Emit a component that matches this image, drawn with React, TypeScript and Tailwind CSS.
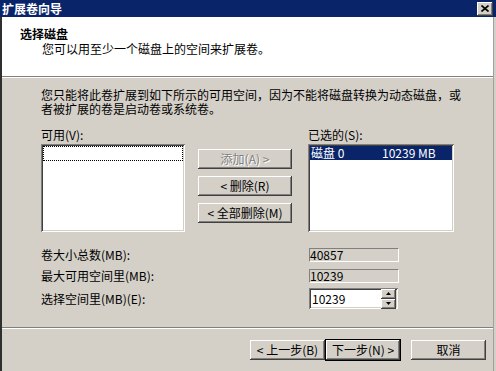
import React from 'react';

const raised =
  'shadow-[inset_-1px_-1px_#404040,inset_1px_1px_#ffffff,inset_-2px_-2px_#808080,inset_2px_2px_#d4d0c8]';
const sunken =
  'shadow-[inset_1px_1px_#808080,inset_-1px_-1px_#ffffff,inset_2px_2px_#404040,inset_-2px_-2px_#d4d0c8]';

const Btn: React.FC<{ children: React.ReactNode; disabled?: boolean; def?: boolean; w?: string }> = ({
  children,
  disabled,
  def,
  w = 'w-[94px]',
}) => (
  <div
    className={`${w} h-[20px] flex items-center justify-center bg-[#d4d0c8] ${def ? 'outline outline-1 outline-black' : ''} ${raised} ${
      disabled ? 'text-[#808080] [text-shadow:1px_1px_0_#ffffff]' : 'text-black'
    }`}
  >
    {children}
  </div>
);

const SpinArrow: React.FC<{ up?: boolean }> = ({ up }) => (
  <div className={`w-[15px] h-[10px] bg-[#d4d0c8] flex items-center justify-center ${raised}`}>
    <svg width="5" height="3" viewBox="0 0 5 3">
      <path d={up ? 'M2.5 0 L5 3 L0 3 Z' : 'M0 0 L5 0 L2.5 3 Z'} fill="#000" />
    </svg>
  </div>
);

export default function App() {
  return (
    <div className="w-[496px] h-[371px] overflow-hidden bg-[#d4d0c8] flex flex-col font-['Noto_Sans_CJK_SC',sans-serif] text-[12px] text-black">
      {/* Title bar */}
      <div className="h-[17px] bg-[#0a246a] flex items-center justify-between pl-[2px] pr-[3px]">
        <span className="text-white font-bold leading-[14px]">扩展卷向导</span>
        <div className={`w-[16px] h-[14px] bg-[#d4d0c8] flex items-center justify-center ${raised}`}>
          <svg width="8" height="7" viewBox="0 0 8 7">
            <path d="M0.5 0.5 L7.5 6.5 M7.5 0.5 L0.5 6.5" stroke="#000" strokeWidth="1.6" />
          </svg>
        </div>
      </div>

      <div className="flex-1 flex">
        <div className="w-[2px] bg-[#2f2f2f]" />

        <div className="flex-1 flex flex-col">
          {/* Header */}
          <div className="h-[59px] bg-white pl-[18px] pt-[10px]">
            <div className="font-bold leading-[14px]">选择磁盘</div>
            <div className="pl-[22px] mt-[1px] leading-[14px]">您可以用至少一个磁盘上的空间来扩展卷。</div>
          </div>
          <div className="h-[2px] border-t border-[#808080] border-b border-b-white" />

          {/* Body */}
          <div className="pl-[39px] pt-[10px] leading-[14px]">
            <div>您只能将此卷扩展到如下所示的可用空间，因为不能将磁盘转换为动态磁盘，或</div>
            <div>者被扩展的卷是启动卷或系统卷。</div>
          </div>

          <div className="flex pl-[39px] mt-[12px]">
            <div className="w-[144px] flex flex-col">
              <div className="leading-[13px]">可用(V):</div>
              <div className={`mt-[3px] h-[88px] bg-white p-[2px] ${sunken}`}>
                <div className="h-[15px] border border-dotted border-black" />
              </div>
            </div>

            <div className="ml-[13px] pt-[21px] flex flex-col gap-[7px]">
              <Btn disabled>添加(A) &gt;</Btn>
              <Btn>&lt; 删除(R)</Btn>
              <Btn>&lt; 全部删除(M)</Btn>
            </div>

            <div className="ml-[16px] w-[146px] flex flex-col">
              <div className="leading-[13px]">已选的(S):</div>
              <div className={`mt-[3px] h-[88px] bg-white p-[2px] ${sunken}`}>
                <div className="h-[14px] bg-[#0a246a] text-white flex items-center leading-[14px]">
                  <span className="w-[72px] pl-[1px]">磁盘 0</span>
                  <span>10239 MB</span>
                </div>
              </div>
            </div>
          </div>

          {/* Size fields */}
          <div className="pl-[39px] mt-[16px] flex flex-col">
            <div className="flex items-center h-[14px]">
              <span className="w-[268px]">卷大小总数(MB):</span>
              <div className="w-[90px] h-[14px] border border-[#808080] border-r-white border-b-white flex items-center leading-[12px]">
                40857
              </div>
            </div>
            <div className="flex items-center h-[14px] mt-[7px]">
              <span className="w-[268px]">最大可用空间里(MB):</span>
              <div className="w-[90px] h-[14px] border border-[#808080] border-r-white border-b-white flex items-center leading-[12px]">
                10239
              </div>
            </div>
            <div className="flex items-center h-[21px] mt-[5px]">
              <span className="w-[268px]">选择空间里(MB)(E):</span>
              <div className={`w-[89px] h-[21px] bg-white flex items-center pl-[3px] pr-[2px] ${sunken}`}>
                <span className="flex-1">10239</span>
                <div className="flex flex-col">
                  <SpinArrow up />
                  <SpinArrow />
                </div>
              </div>
            </div>
          </div>

          <div className="mt-[18px] h-[2px] border-t border-[#808080] border-b border-b-white" />

          {/* Wizard buttons */}
          <div className="mt-[11px] flex pl-[248px]">
            <Btn w="w-[75px]">&lt; 上一步(B)</Btn>
            <div className="ml-[1px]">
              <Btn def w="w-[74px]">下一步(N) &gt;</Btn>
            </div>
            <div className="ml-[11px]">
              <Btn w="w-[75px]">取消</Btn>
            </div>
          </div>
        </div>

        <div className="w-[3px] bg-[#d4d0c8] border-l border-[#a0a0a0]" />
      </div>
    </div>
  );
}
